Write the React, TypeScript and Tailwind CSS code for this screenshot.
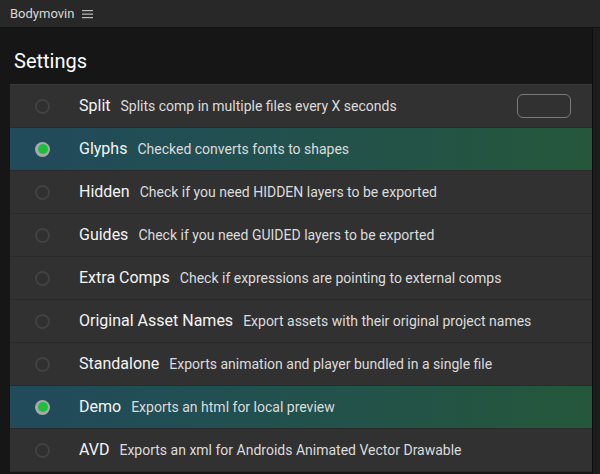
import { useState } from "react";

type Setting = {
    id: string;
    name: string;
    description: string;
    checked: boolean;
    hasInput?: boolean;
};

const initialSettings: Setting[] = [
    { id: "split", name: "Split", description: "Splits comp in multiple files every X seconds", checked: false, hasInput: true },
    { id: "glyphs", name: "Glyphs", description: "Checked converts fonts to shapes", checked: true },
    { id: "hidden", name: "Hidden", description: "Check if you need HIDDEN layers to be exported", checked: false },
    { id: "guides", name: "Guides", description: "Check if you need GUIDED layers to be exported", checked: false },
    { id: "extra", name: "Extra Comps", description: "Check if expressions are pointing to external comps", checked: false },
    { id: "original", name: "Original Asset Names", description: "Export assets with their original project names", checked: false },
    { id: "standalone", name: "Standalone", description: "Exports animation and player bundled in a single file", checked: false },
    { id: "demo", name: "Demo", description: "Exports an html for local preview", checked: true },
    { id: "avd", name: "AVD", description: "Exports an xml for Androids Animated Vector Drawable", checked: false },
];

function Radio({ checked }: { checked: boolean }) {
    if (checked) {
        return (
            <span className="flex h-[15px] w-[15px] shrink-0 items-center justify-center rounded-full bg-[#a7aaa9]">
                <span className="h-[10px] w-[10px] rounded-full bg-[#1fbf3d]" />
            </span>
        );
    }
    return (
        <span className="h-[15px] w-[15px] shrink-0 rounded-full border-2 border-[#424242] bg-[#303030]" />
    );
}

function App() {
    const [settings, setSettings] = useState(initialSettings);

    function toggle(id: string) {
        setSettings((prev) =>
            prev.map((s) => (s.id === id ? { ...s, checked: !s.checked } : s))
        );
    }

    return (
        <div
            className="flex h-[474px] w-[600px] flex-col overflow-hidden bg-[#161616] text-[#e6e6e6]"
            style={{ fontFamily: "Roboto, 'Liberation Sans', sans-serif" }}
        >
            <div className="flex h-[28px] shrink-0 items-center gap-2 border-b border-[#121212] bg-[#282828] pl-[10px]">
                <span className="text-[13px] text-[#d8d8d8]">Bodymovin</span>
                <svg width="11" height="10" viewBox="0 0 11 10" className="text-[#bdbdbd]">
                    <rect x="0" y="1" width="11" height="1.2" fill="currentColor" />
                    <rect x="0" y="4.5" width="11" height="1.2" fill="currentColor" />
                    <rect x="0" y="8" width="11" height="1.2" fill="currentColor" />
                </svg>
            </div>
            <div className="flex flex-1">
                <div className="flex flex-1 flex-col">
                    <h1 className="pl-[14px] pt-[22px] pb-[12px] text-[20px] leading-[22px] text-white">
                        Settings
                    </h1>
                    <ul className="ml-[10px] flex flex-col border-t border-[#3a3a3a]">
                        {settings.map((s) => (
                            <li
                                key={s.id}
                                onClick={() => toggle(s.id)}
                                className={
                                    s.checked
                                        ? "flex h-[43px] cursor-pointer items-center border-b border-[#2a2a2a] bg-gradient-to-r from-[#214a5c] to-[#25573b] pl-[25px] pr-[21px]"
                                        : "flex h-[43px] cursor-pointer items-center border-b border-[#2a2a2a] bg-[#313131] pl-[25px] pr-[21px]"
                                }
                            >
                                <Radio checked={s.checked} />
                                <span className="ml-[29px] text-[16px] text-[#f4f4f4]">
                                    {s.name}
                                </span>
                                <span className="ml-[10px] text-[14px] text-[#dcdcdc]">
                                    {s.description}
                                </span>
                                {s.hasInput && (
                                    <input
                                        type="text"
                                        onClick={(e) => e.stopPropagation()}
                                        className="ml-auto h-[24px] w-[54px] rounded-[6px] border border-[#7a7a7a] bg-transparent px-2 text-[13px] text-white outline-none"
                                    />
                                )}
                            </li>
                        ))}
                    </ul>
                </div>
                <div className="w-[8px] border-l border-[#0f0f0f] bg-[#1c1c1c]" />
            </div>
        </div>
    );
}

export default App;
